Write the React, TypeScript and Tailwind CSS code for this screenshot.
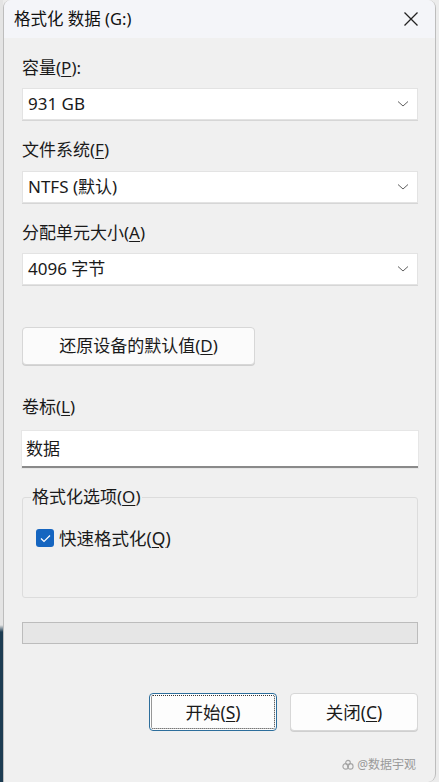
import React from 'react';

const font = { fontFamily: '"Noto Sans", "Noto Sans CJK SC", sans-serif' };

const Chevron = () => (
  <svg width="12" height="8" viewBox="0 0 12 8" className="text-[#606060]">
    <path d="M1 1.5 L6 6 L11 1.5" fill="none" stroke="currentColor" strokeWidth="1" />
  </svg>
);

const Combo = ({ value }: { value: string }) => (
  <div className="h-[32px] bg-white border border-[#e3e3e3] flex items-center justify-between pl-[5px] pr-[8px] text-[17px] text-[#1a1a1a] shadow-[0_1px_0_#d6d6d6]">
    <span>{value}</span>
    <Chevron />
  </div>
);

export default function App() {
  return (
    <div className="w-[439px] h-[782px] flex bg-[#ececec] overflow-hidden" style={font}>
      {/* desktop edge peeking out at the left */}
      <div className="w-[3px] h-full bg-[linear-gradient(to_bottom,#e4e4e4_0,#e4e4e4_625px,#1d3c52_632px,#1d3c52_100%)]" />

      <div className="w-[433px] h-full flex flex-col bg-[#f0f0f0] border-l border-r border-[#bdbdbd] rounded-t-[8px] rounded-br-[8px] overflow-hidden">
        {/* title bar */}
        <div className="h-[38px] bg-[#f4f5f9] flex items-center justify-between pl-[10px] pr-[16px] text-[16.5px] text-[#111]">
          <span>格式化 数据 (G:)</span>
          <svg width="16" height="16" viewBox="0 0 16 16">
            <path d="M1.5 1.5 L14.5 14.5 M14.5 1.5 L1.5 14.5" stroke="#222" strokeWidth="1.3" />
          </svg>
        </div>

        <div className="flex-1 flex flex-col pl-[18px] pr-[17px] pt-[19px] text-[17px] text-[#1a1a1a] leading-[22px]">
          <div>容量(<u className="underline-offset-2">P</u>):</div>
          <div className="mt-[9px]"><Combo value="931 GB" /></div>

          <div className="mt-[19px]">文件系统(<u className="underline-offset-2">F</u>)</div>
          <div className="mt-[10px]"><Combo value="NTFS (默认)" /></div>

          <div className="mt-[19px]">分配单元大小(<u className="underline-offset-2">A</u>)</div>
          <div className="mt-[9px]"><Combo value="4096 字节" /></div>

          <button className="mt-[42px] w-[233px] h-[38px] bg-[#fbfbfb] border border-[#d7d7d7] rounded-[4px] text-[17px] text-[#1a1a1a] shadow-[0_1px_0_#cfcfcf]">
            还原设备的默认值(<u className="underline-offset-2">D</u>)
          </button>

          <div className="mt-[31px]">卷标(<u className="underline-offset-2">L</u>)</div>
          <div className="mt-[13px] h-[37px] bg-white border-b-[2px] border-[#8a8a8a] flex items-center pl-[4px] shadow-[0_0_0_1px_#e6e6e6]">
            数据
          </div>

          <div className="mt-[29px] relative h-[101px] border border-[#dcdcdc] rounded-[3px]">
            <div className="absolute -top-[12px] left-[8px] bg-[#f0f0f0] px-[1px]">
              格式化选项(<u className="underline-offset-2">O</u>)
            </div>
            <div className="flex items-center gap-[5px] pl-[13px] pt-[29px]">
              <div className="w-[18px] h-[18px] rounded-[3px] bg-[#1565c0] flex items-center justify-center">
                <svg width="11" height="9" viewBox="0 0 11 9">
                  <path d="M1 4.5 L4 7.5 L10 1.5" fill="none" stroke="#fff" strokeWidth="1.2" />
                </svg>
              </div>
              <span className="text-[17.5px]">快速格式化(<u className="underline-offset-2">Q</u>)</span>
            </div>
          </div>

          <div className="mt-[24px] h-[22px] bg-[#e6e6e6] border border-[#bcbcbc]" />

          <div className="mt-[49px] flex justify-end gap-[13px]">
            <button className="w-[128px] h-[38px] bg-[#fdfdfd] border border-[#2d6e9c] rounded-[4px] outline outline-1 outline-dotted outline-[#333] -outline-offset-[3px] text-[17.5px] text-[#1a1a1a]">
              开始(<u className="underline-offset-2">S</u>)
            </button>
            <button className="w-[128px] h-[38px] bg-[#fdfdfd] border border-[#d7d7d7] rounded-[4px] shadow-[0_1px_0_#cfcfcf] text-[17.5px] text-[#1a1a1a]">
              关闭(<u className="underline-offset-2">C</u>)
            </button>
          </div>

          <div className="mt-auto mb-[6px] self-end flex items-center gap-[3px] text-[12px] text-[#9a9a9a] pr-[2px]">
            <svg width="12" height="12" viewBox="0 0 13 13">
              <circle cx="4" cy="8" r="3" fill="none" stroke="#a5a5a5" strokeWidth="1.2" />
              <circle cx="9" cy="8" r="3" fill="none" stroke="#a5a5a5" strokeWidth="1.2" />
              <circle cx="6.5" cy="4" r="2.5" fill="none" stroke="#a5a5a5" strokeWidth="1.2" />
            </svg>
            <span>@数据宇观</span>
          </div>
        </div>
      </div>
    </div>
  );
}
